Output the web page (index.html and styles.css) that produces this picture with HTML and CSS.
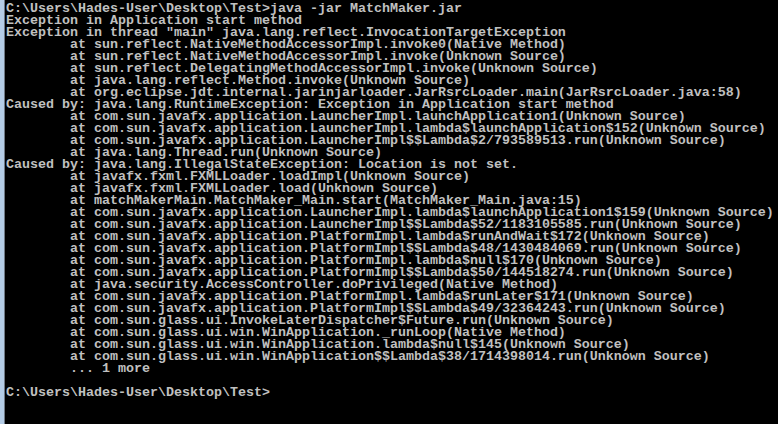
FILE: index.html
```html
<!DOCTYPE html>
<html lang="en">
<head>
  <meta charset="UTF-8">
  <title>Command Prompt</title>
  <link rel="stylesheet" href="styles.css">
</head>
<body>
  <div class="ventana">
    <div class="borde"></div>
    <pre class="consola">C:\Users\Hades-User\Desktop\Test&gt;java -jar MatchMaker.jar
Exception in Application start method
Exception in thread "main" java.lang.reflect.InvocationTargetException
        at sun.reflect.NativeMethodAccessorImpl.invoke0(Native Method)
        at sun.reflect.NativeMethodAccessorImpl.invoke(Unknown Source)
        at sun.reflect.DelegatingMethodAccessorImpl.invoke(Unknown Source)
        at java.lang.reflect.Method.invoke(Unknown Source)
        at org.eclipse.jdt.internal.jarinjarloader.JarRsrcLoader.main(JarRsrcLoader.java:58)
Caused by: java.lang.RuntimeException: Exception in Application start method
        at com.sun.javafx.application.LauncherImpl.launchApplication1(Unknown Source)
        at com.sun.javafx.application.LauncherImpl.lambda$launchApplication$152(Unknown Source)
        at com.sun.javafx.application.LauncherImpl$$Lambda$2/793589513.run(Unknown Source)
        at java.lang.Thread.run(Unknown Source)
Caused by: java.lang.IllegalStateException: Location is not set.
        at javafx.fxml.FXMLLoader.loadImpl(Unknown Source)
        at javafx.fxml.FXMLLoader.load(Unknown Source)
        at matchMakerMain.MatchMaker_Main.start(MatchMaker_Main.java:15)
        at com.sun.javafx.application.LauncherImpl.lambda$launchApplication1$159(Unknown Source)
        at com.sun.javafx.application.LauncherImpl$$Lambda$52/1183105585.run(Unknown Source)
        at com.sun.javafx.application.PlatformImpl.lambda$runAndWait$172(Unknown Source)
        at com.sun.javafx.application.PlatformImpl$$Lambda$48/1430484069.run(Unknown Source)
        at com.sun.javafx.application.PlatformImpl.lambda$null$170(Unknown Source)
        at com.sun.javafx.application.PlatformImpl$$Lambda$50/144518274.run(Unknown Source)
        at java.security.AccessController.doPrivileged(Native Method)
        at com.sun.javafx.application.PlatformImpl.lambda$runLater$171(Unknown Source)
        at com.sun.javafx.application.PlatformImpl$$Lambda$49/32364243.run(Unknown Source)
        at com.sun.glass.ui.InvokeLaterDispatcher$Future.run(Unknown Source)
        at com.sun.glass.ui.win.WinApplication._runLoop(Native Method)
        at com.sun.glass.ui.win.WinApplication.lambda$null$145(Unknown Source)
        at com.sun.glass.ui.win.WinApplication$$Lambda$38/1714398014.run(Unknown Source)
        ... 1 more

C:\Users\Hades-User\Desktop\Test&gt;</pre>
  </div>
</body>
</html>
```

FILE: styles.css
```css
html, body {
  margin: 0;
  padding: 0;
  width: 100%;
  height: 100%;
  overflow: hidden;
  background-color: #000000;
}

.ventana {
  display: flex;
  width: 100%;
  height: 100%;
}

.borde {
  flex: 0 0 4px;
  background-color: #b4cce6;
  border-right: 1px solid #6e7884;
}

.consola {
  flex: 1;
  margin: 0;
  padding: 3px 0 0 1px;
  color: #c0c0c0;
  font-family: "Liberation Mono", monospace;
  font-size: 13.333px;
  font-weight: bold;
  line-height: 12px;
  white-space: pre;
  overflow: hidden;
}
```
